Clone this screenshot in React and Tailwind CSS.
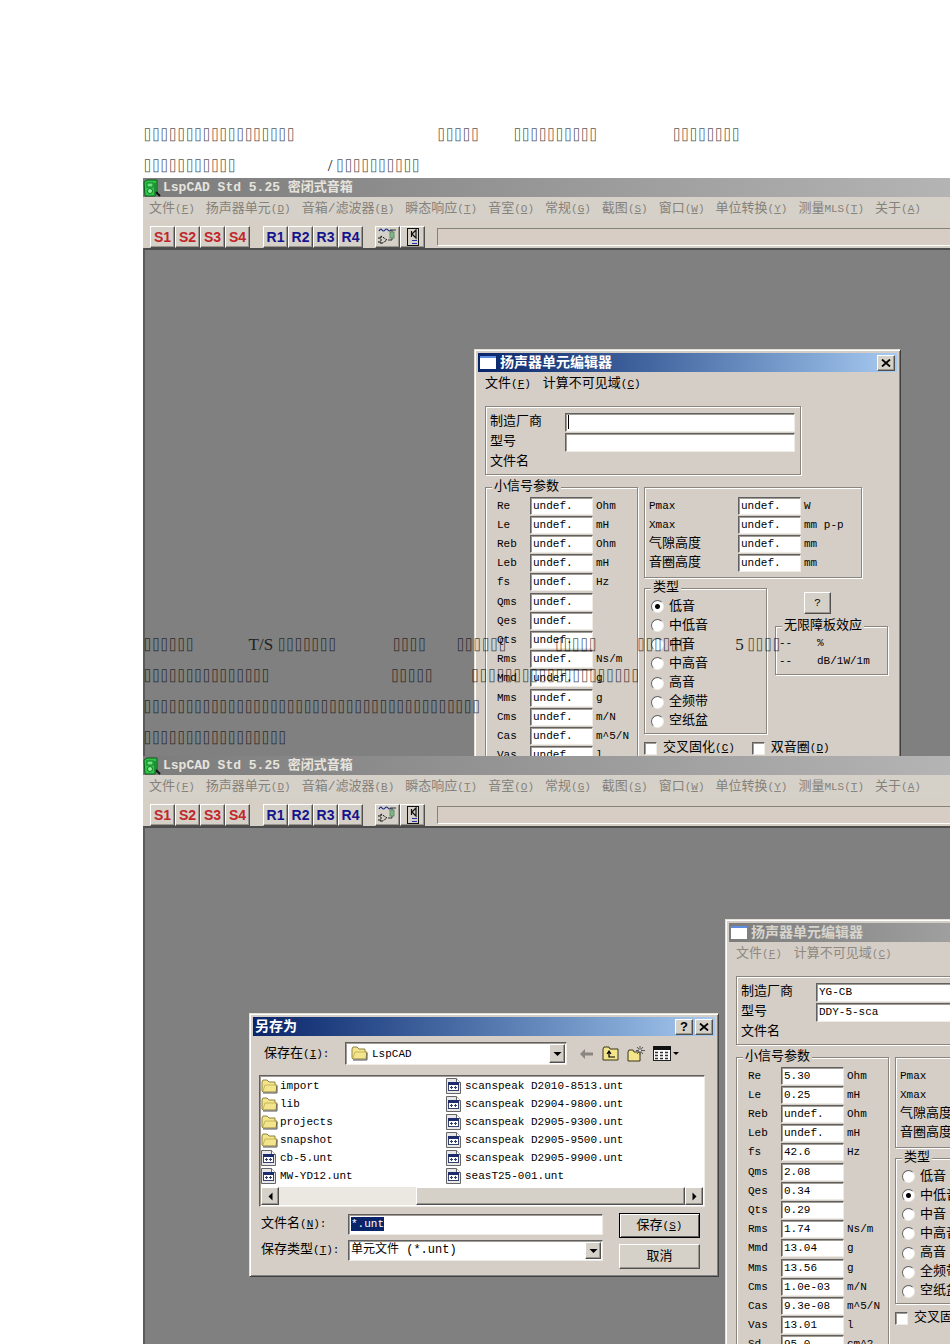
const menuItems = [
  ["文件", "F"],
  ["扬声器单元", "D"],
  ["音箱/滤波器", "B"],
  ["瞬态响应", "T"],
  ["音室", "O"],
  ["常规", "G"],
  ["截图", "S"],
  ["窗口", "W"],
  ["单位转换", "Y"],
  ["测量MLS", "T"],
  ["关于", "A"],
];

const params = [
  ["Re", "Ohm"],
  ["Le", "mH"],
  ["Reb", "Ohm"],
  ["Leb", "mH"],
  ["fs", "Hz"],
  ["Qms", ""],
  ["Qes", ""],
  ["Qts", ""],
  ["Rms", "Ns/m"],
  ["Mmd", "g"],
  ["Mms", "g"],
  ["Cms", "m/N"],
  ["Cas", "m^5/N"],
  ["Vas", "l"],
  ["Sd", "cm^2"],
];

const limits = [
  ["Pmax", "W"],
  ["Xmax", "mm p-p"],
  ["气隙高度", "mm"],
  ["音圈高度", "mm"],
];

const driverTypes = ["低音", "中低音", "中音", "中高音", "高音", "全频带", "空纸盆"];

const leftFiles = ["import", "lib", "projects", "snapshot", "cb-5.unt", "MW-YD12.unt"];
const rightFiles = [
  "scanspeak D2010-8513.unt",
  "scanspeak D2904-9800.unt",
  "scanspeak D2905-9300.unt",
  "scanspeak D2905-9500.unt",
  "scanspeak D2905-9900.unt",
  "seasT25-001.unt",
];

const savedValues = {
  Re: "5.30", Le: "0.25", fs: "42.6", Qms: "2.08", Qes: "0.34", Qts: "0.29", Rms: "1.74",
  Mmd: "13.04", Mms: "13.56", Cms: "1.0e-03", Cas: "9.3e-08", Vas: "13.01", Sd: "95.0",
};

const raised = "border border-t-white border-l-white border-r-[#505050] border-b-[#505050] bg-[#d5d0c8] shadow-[inset_-1px_-1px_0_#9a968e]";
const sunken = "border border-t-[#606060] border-l-[#606060] border-r-[#efece6] border-b-[#efece6] bg-white shadow-[inset_1px_1px_0_#a09c94]";
const etched = "border border-[#8a867e] shadow-[1px_1px_0_#fff,inset_1px_1px_0_#fff]";
const frame = "border border-t-[#e4e0d8] border-l-[#e4e0d8] border-r-[#404040] border-b-[#404040] bg-[#d5cec6] p-[3px] shadow-[inset_1px_1px_0_#fff,inset_-1px_-1px_0_#808080]";

// label with its access key underlined: 文件(F)
function Key({ text, k, end = "" }) {
  return (
    <span className="whitespace-nowrap">
      {text}
      <span className="text-[11px]">(<u>{k}</u>){end}</span>
    </span>
  );
}

function Boxes({ n, className = "" }) {
  return <span className={`font-['DejaVu_Sans_Mono',monospace] text-[14px] text-black/70 ${className}`}>{"⌷".repeat(n)}</span>;
}

function Line({ children }) {
  return <p className="flex h-[31px] items-end whitespace-nowrap leading-6">{children}</p>;
}

function AppIcon() {
  return (
    <svg width="18" height="18" viewBox="0 0 18 18">
      <path d="M1 3 L4 1 H14 V14 L12 17 H2 Z" fill="#2fc548" stroke="#0c5c1c" />
      <path d="M12 4 V16" stroke="#0c5c1c" />
      <rect x="4" y="4" width="6" height="4" fill="#6ae67c" stroke="#0f7a26" />
      <circle cx="7" cy="12" r="2.5" fill="#8cf59c" stroke="#0f7a26" />
      <path d="M13 13 L17 17" stroke="#111" strokeWidth="2" />
    </svg>
  );
}

function FilterIcon() {
  return (
    <svg width="20" height="20" viewBox="0 0 20 20" fill="none">
      <path d="M1 4 Q2.5 1 4 3 T7 3 T10 3 T13 3" stroke="#1b2a8c" strokeWidth="1.2" />
      <path d="M12 3 H18 M14 3 V5 M14 11 V13 H10" stroke="#333" />
      <rect x="12" y="5" width="4" height="6" fill="#86b48a" stroke="#5f8f64" />
      <path d="M3 9 V17 L9 13 Z" stroke="#111" strokeDasharray="2 1" />
      <path d="M0 11 H3 M0 15 H3" stroke="#111" />
    </svg>
  );
}

function SpeakerIcon() {
  return (
    <svg width="20" height="20" viewBox="0 0 20 20" fill="none">
      <rect x="4.5" y="1.5" width="11" height="17" stroke="#111" />
      <path d="M8.5 4 V10 M9 7 L13 3 V11 L9 7" stroke="#111" strokeWidth="1.2" />
      <path d="M9 13.5 H14 M9 16.5 H14" stroke="#2430a8" />
    </svg>
  );
}

function FolderIcon() {
  return (
    <svg width="17" height="15" viewBox="0 0 17 15">
      <path d="M1 3 L2 1 H6 L8 3 H14 V6 H16 L15 13 H2 L1 12 Z" fill="#f3e58c" stroke="#8f8240" />
      <path d="M2 12 L4 6 H15" fill="none" stroke="#c7b65c" />
      <path d="M2 14 H16 V7" fill="none" stroke="#555" />
    </svg>
  );
}

function FileIcon() {
  return (
    <svg width="15" height="16" viewBox="0 0 15 16">
      <path d="M0.5 0.5 H10.5 L14.5 4.5 V15.5 H0.5 Z" fill="#e8e8e8" stroke="#666" />
      <path d="M10.5 0.5 V4.5 H14.5" fill="#fff" stroke="#666" />
      <rect x="2.5" y="4.5" width="10" height="8" fill="#fff" stroke="#34406e" />
      <rect x="2" y="4" width="11" height="3" fill="#1d2c6c" />
      <path d="M5.5 8 V11 M4 9.5 H7 M9.5 8 V11 M8 9.5 H11" stroke="#34406e" />
    </svg>
  );
}

function Arrow({ d }) {
  return (
    <svg width="9" height="9" viewBox="0 0 9 9">
      <path d={d} fill="#000" />
    </svg>
  );
}

function TitleButton({ label, children }) {
  return (
    <button aria-label={label} className={`flex h-4 w-[18px] items-center justify-center ${raised}`}>
      {children}
    </button>
  );
}

function CloseGlyph() {
  return (
    <svg width="10" height="8" viewBox="0 0 10 8">
      <path d="M1 0.5 L9 7.5 M9 0.5 L1 7.5" stroke="#000" strokeWidth="1.8" />
    </svg>
  );
}

function ToolButton({ children, className = "" }) {
  return (
    <button className={`flex h-[22px] w-[25px] shrink-0 items-center justify-center font-['Liberation_Sans',sans-serif] text-[14px] font-bold ${raised} ${className}`}>
      {children}
    </button>
  );
}

function LspWindow({ children, className }) {
  return (
    <section className="overflow-hidden font-['Liberation_Mono','Noto_Sans_CJK_SC',monospace] text-[13px] leading-4 text-black">
      <header className="flex h-[19px] items-center gap-0.5 bg-linear-to-r from-[#7c7c7c] to-[#b4b4b4] font-bold text-[#e6e3dd]">
        <AppIcon />
        <h2>LspCAD Std 5.25 密闭式音箱</h2>
      </header>
      <nav className="flex h-[23px] items-center gap-[11px] bg-[#d5d1c9] pl-1.5 text-[#85817b]">
        {menuItems.map(([text, k]) => (
          <button key={text}>
            {text === "测量MLS" ? <>测量<span className="text-[11px]">MLS</span><Key text="" k={k} /></> : <Key text={text} k={k} />}
          </button>
        ))}
      </nav>
      <div className="flex h-7 items-end bg-[#d6cfc6] pl-[7px]">
        <div className="mr-[13px] flex text-[#c0262a]">
          {["S1", "S2", "S3", "S4"].map((s) => <ToolButton key={s}>{s}</ToolButton>)}
        </div>
        <div className="mr-3 flex text-[#14148c]">
          {["R1", "R2", "R3", "R4"].map((s) => <ToolButton key={s}>{s}</ToolButton>)}
        </div>
        <ToolButton><FilterIcon /></ToolButton>
        <ToolButton><SpeakerIcon /></ToolButton>
        <div className="mb-0.5 ml-3 h-[18px] flex-1 border-t border-b border-l border-t-[#85817b] border-b-white border-l-[#85817b] bg-[#d7cdc4]" />
      </div>
      <div className={`relative overflow-hidden border-t-2 border-l-2 border-t-[#4c4c4c] border-l-[#5a5a5a] bg-[#808080] ${className}`}>
        {children}
      </div>
    </section>
  );
}

function UnitEditor({ id, active, maker, model, values, type, className }) {
  return (
    <div className={`absolute w-[427px] ${frame} ${className}`}>
      <div className={`flex h-[19px] items-center pr-0.5 pl-0.5 ${active ? "bg-linear-to-r from-[#0a246a] to-[#a6caf0] text-white" : "bg-linear-to-r from-[#7c7c7c] to-[#c0c0c0] text-[#d8d4cc]"}`}>
        <svg width="16" height="13" viewBox="0 0 16 13" className="mr-1">
          <rect width="16" height="13" fill="#fff" />
          <rect width="16" height="2" fill="#5d8ce0" />
        </svg>
        <h3 className="flex-1 text-[14px] font-bold">扬声器单元编辑器</h3>
        <TitleButton label="关闭"><CloseGlyph /></TitleButton>
      </div>
      <nav className={`flex h-6 items-center gap-3 pl-[7px] ${active ? "" : "text-[#8c8882]"}`}>
        <button><Key text="文件" k="F" /></button>
        <button><Key text="计算不可见域" k="C" /></button>
      </nav>
      <div className="mt-2.5 pl-[7px]">
        <div className={`grid h-[69px] w-[316px] auto-rows-[20px] grid-cols-[75px_230px] items-center pt-[5px] pl-1 ${etched}`}>
          <label htmlFor={`${id}-maker`}>制造厂商</label>
          <div className={`flex h-[19px] items-center pl-0.5 ${sunken}`}>
            {active && <span className="h-[14px] w-px bg-black" />}
            <input id={`${id}-maker`} defaultValue={maker} className="min-w-0 flex-1 text-[11px] outline-none" />
          </div>
          <label htmlFor={`${id}-model`}>型号</label>
          <div className={`flex h-[19px] items-center pl-0.5 ${sunken}`}>
            <input id={`${id}-model`} defaultValue={model} className="min-w-0 flex-1 text-[11px] outline-none" />
          </div>
          <span>文件名</span>
        </div>
        <div className="mt-1 flex items-start gap-1.5">
          <fieldset className={`w-[153px] shrink-0 ${etched}`}>
            <legend className="ml-1.5 bg-[#d5cec6] px-0.5">小信号参数</legend>
            <div className="mt-px grid h-[288px] auto-rows-fr text-[11px]">
              {params.map(([name, unit]) => (
                <div key={name} className="grid grid-cols-[33px_63px_1fr] items-center pl-[11px]">
                  <label htmlFor={`${id}-${name}`}>{name}</label>
                  <input id={`${id}-${name}`} defaultValue={values[name] || "undef."} className={`h-[18px] w-full pl-0.5 ${sunken}`} />
                  <span className="pl-[3px]">{unit}</span>
                </div>
              ))}
            </div>
          </fieldset>
          <div className="pt-2">
            <div className={`h-[91px] w-[218px] pt-2 ${etched}`}>
              <div className="grid h-[77px] auto-rows-fr">
                {limits.map(([name, unit]) => (
                  <div key={name} className="grid grid-cols-[89px_63px_1fr] items-center pl-1">
                    <label htmlFor={`${id}-${name}`} className={/[a-z]/.test(name) ? "text-[11px]" : ""}>{name}</label>
                    <input id={`${id}-${name}`} defaultValue="undef." className={`h-[18px] w-full pl-0.5 text-[11px] ${sunken}`} />
                    <span className="pl-[3px] text-[11px]">{unit}</span>
                  </div>
                ))}
              </div>
            </div>
            <div className="mt-0.5 flex items-start gap-2">
              <fieldset className={`h-[154px] w-[123px] shrink-0 ${etched}`}>
                <legend className="ml-1.5 bg-[#d5cec6] px-0.5">类型</legend>
                <div className="mt-px grid h-[134px] auto-rows-fr">
                  {driverTypes.map((t) => (
                    <label key={t} className="flex items-center gap-[5px] pl-1.5">
                      <input
                        type="radio"
                        name={`${id}-type`}
                        defaultChecked={t === type}
                        className="size-[13px] appearance-none rounded-full border border-t-[#606060] border-r-[#efece6] border-b-[#efece6] border-l-[#606060] bg-white checked:bg-[radial-gradient(circle,#000_2px,#fff_3px)]"
                      />
                      {t}
                    </label>
                  ))}
                </div>
              </fieldset>
              <div>
                <button className={`mt-3 ml-[29px] block h-[22px] w-[27px] text-[11px] ${raised}`}>?</button>
                <fieldset className={`mt-1 w-[113px] pb-1 ${etched}`}>
                  <legend className="ml-1.5 bg-[#d5cec6] px-0.5">无限障板效应</legend>
                  <div className="grid auto-rows-[18px] grid-cols-[38px_1fr] items-center pl-[3px] text-[11px]">
                    <span>--</span>
                    <span>%</span>
                    <span>--</span>
                    <span>dB/1W/1m</span>
                  </div>
                </fieldset>
              </div>
            </div>
            <div className="mt-1.5 flex gap-[17px]">
              <label className="flex items-center gap-1.5">
                <input type="checkbox" className={`size-[13px] appearance-none ${sunken}`} />
                <Key text="交叉固化" k="C" />
              </label>
              <label className="flex items-center gap-1.5">
                <input type="checkbox" className={`size-[13px] appearance-none ${sunken}`} />
                <Key text="双音圈" k="D" />
              </label>
            </div>
          </div>
        </div>
      </div>
    </div>
  );
}

function DropArrow() {
  return (
    <span className={`pointer-events-none absolute inset-y-[2px] right-[2px] flex w-4 items-center justify-center ${raised}`}>
      <Arrow d="M0.5 3 H8.5 L4.5 7 Z" />
    </span>
  );
}

function FileColumn({ files }) {
  return (
    <ul className="text-[11px]">
      {files.map((f) => (
        <li key={f} className="flex h-[18px] items-center gap-0.5">
          <span className="w-[17px]">{f.includes(".") ? <FileIcon /> : <FolderIcon />}</span>
          {f}
        </li>
      ))}
    </ul>
  );
}

function SaveDialog({ className }) {
  return (
    <form className={`absolute w-[470px] ${frame} ${className}`} onSubmit={(e) => e.preventDefault()}>
      <div className="flex h-[19px] items-center gap-0.5 bg-linear-to-r from-[#0a246a] to-[#a6caf0] pr-0.5 pl-0.5 text-white">
        <h3 className="flex-1 text-[14px] font-bold">另存为</h3>
        <TitleButton label="帮助"><span className="font-['Liberation_Sans',sans-serif] font-bold text-black">?</span></TitleButton>
        <TitleButton label="关闭"><CloseGlyph /></TitleButton>
      </div>
      <div className="mt-1.5 flex items-center pl-[11px]">
        <label htmlFor="save-in" className="w-[81px]"><Key text="保存在" k="I" end=":" /></label>
        <div className="relative h-[23px] w-[222px]">
          <select id="save-in" className={`h-full w-full appearance-none pl-[26px] text-[11px] ${sunken}`}>
            <option>LspCAD</option>
          </select>
          <span className="pointer-events-none absolute top-1 left-1.5"><FolderIcon /></span>
          <DropArrow />
        </div>
        <div className="ml-3 flex items-center gap-2">
          <button type="button" aria-label="后退">
            <svg width="15" height="12" viewBox="0 0 15 12"><path d="M1 6 L6 1 V4.5 H14 V7.5 H6 V11 Z" fill="#8a8680" /></svg>
          </button>
          <button type="button" aria-label="向上一级">
            <svg width="17" height="15" viewBox="0 0 17 15">
              <path d="M1 3 L2 1 H7 L8 3 H16 V14 H1 Z" fill="#f3e58c" stroke="#3a3618" />
              <path d="M5 8 L7 5 L9 8 M7 6 V11 H13" fill="none" stroke="#000" strokeWidth="1.2" />
            </svg>
          </button>
          <button type="button" aria-label="新建文件夹">
            <svg width="18" height="16" viewBox="0 0 18 16">
              <path d="M1 6 L2 4 H6 L7 6 H13 V15 H1 Z" fill="#f3e58c" stroke="#3a3618" />
              <path d="M13 0 V9 M9 4.5 H18 M10 1 L16 8 M16 1 L10 8" stroke="#555" />
              <circle cx="13" cy="4.5" r="1" fill="#fff" />
            </svg>
          </button>
          <button type="button" aria-label="查看" className="flex items-center">
            <svg width="26" height="15" viewBox="0 0 26 15">
              <rect x="0.5" y="0.5" width="17" height="14" fill="#fff" stroke="#222" />
              <rect width="18" height="4" fill="#111" />
              <path d="M2 6.5 H16 M2 9.5 H16 M2 12.5 H16" stroke="#333" strokeWidth="1.4" strokeDasharray="3 2" />
              <path d="M20 6 H26 L23 9 Z" fill="#000" />
            </svg>
          </button>
        </div>
      </div>
      <div className={`mt-2.5 ml-1.5 w-[446px] p-px ${sunken}`}>
        <div className="grid grid-cols-[185px_1fr]">
          <FileColumn files={leftFiles} />
          <FileColumn files={rightFiles} />
        </div>
        <div className="mt-0.5 flex h-[18px] bg-[#ebe8e2]">
          <button type="button" aria-label="向左滚动" className={`flex w-[18px] items-center justify-center ${raised}`}>
            <Arrow d="M6.5 0.5 V8.5 L2.5 4.5 Z" />
          </button>
          <div className={`ml-[137px] flex-1 ${raised}`} />
          <button type="button" aria-label="向右滚动" className={`flex w-[18px] items-center justify-center ${raised}`}>
            <Arrow d="M2.5 0.5 V8.5 L6.5 4.5 Z" />
          </button>
        </div>
      </div>
      <div className="mt-1 mb-1 flex gap-4 pl-2">
        <div className="grid auto-rows-[26px] grid-cols-[87px_255px] items-center">
          <label htmlFor="save-name"><Key text="文件名" k="N" end=":" /></label>
          <div className={`flex h-[21px] items-center px-0.5 ${sunken}`}>
            <input id="save-name" defaultValue="*.unt" className="field-sizing-content h-[14px] bg-[#0a246a] text-[11px] text-white outline-none" />
          </div>
          <label htmlFor="save-type"><Key text="保存类型" k="T" end=":" /></label>
          <div className="relative h-[21px]">
            <select id="save-type" className={`h-full w-full appearance-none pl-0.5 text-[12px] ${sunken}`}>
              <option>单元文件 (*.unt)</option>
            </select>
            <DropArrow />
          </div>
        </div>
        <div className="flex flex-col gap-1.5 pt-0.5">
          <button type="submit" className="h-[25px] w-[81px] border border-black bg-[#d5d0c8] shadow-[inset_1px_1px_0_#fff,inset_-1px_-1px_0_#606060]">
            <Key text="保存" k="S" />
          </button>
          <button type="button" className={`h-[25px] w-[81px] ${raised}`}>取消</button>
        </div>
      </div>
    </form>
  );
}

export default function App() {
  return (
    <main className="min-h-screen overflow-hidden bg-white pt-[116px] pl-[143px] font-['Liberation_Serif',serif] text-[17px] text-[#222]">
      <Line>
        <Boxes n={18} />
        <Boxes n={5} className="ml-[142px]" />
        <Boxes n={10} className="ml-[34px]" />
        <Boxes n={8} className="ml-[75px]" />
      </Line>
      <Line>
        <Boxes n={11} />
        <span className="ml-[92px]">/</span>
        <Boxes n={10} className="ml-[3px]" />
      </Line>
      <div className="relative">
        <LspWindow className="h-[508px]">
          <UnitEditor id="new" active maker="" model="" values={{}} type="低音" className="top-[99px] left-[329px]" />
        </LspWindow>
        {/* body text runs over the lower part of the window */}
        <div className="absolute bottom-1.5 left-0">
          <Line>
            <Boxes n={6} />
            <span className="ml-[55px]">T/S</span>
            <Boxes n={7} className="ml-1" />
            <Boxes n={4} className="ml-[56px]" />
            <Boxes n={6} className="ml-[30px]" />
            <Boxes n={5} className="ml-12" />
            <Boxes n={6} className="ml-10" />
            <span className="ml-12">5</span>
            <Boxes n={4} className="ml-[3px]" />
          </Line>
          <Line>
            <Boxes n={15} />
            <Boxes n={5} className="ml-[121px]" />
            <Boxes n={20} className="ml-[38px]" />
          </Line>
          <Line>
            <Boxes n={40} />
          </Line>
          <Line>
            <Boxes n={17} />
          </Line>
        </div>
      </div>
      <LspWindow className="h-[518px]">
        <UnitEditor id="saved" maker="YG-CB" model="DDY-5-sca" values={savedValues} type="中低音" className="top-[91px] left-[580px]" />
        <SaveDialog className="top-[185px] left-[104px]" />
      </LspWindow>
    </main>
  );
}
